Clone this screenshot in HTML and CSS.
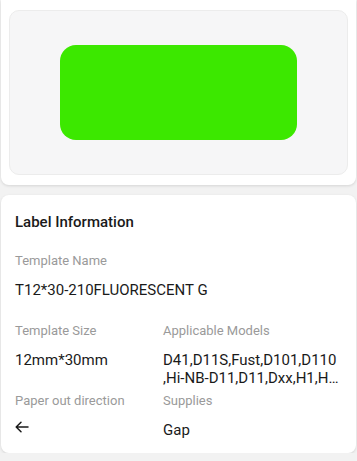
FILE: index.html
```html
<!DOCTYPE html>
<html lang="en">
<head>
    <meta charset="UTF-8">
    <meta name="viewport" content="width=device-width, initial-scale=1.0">
    <title>Label Information</title>
    <link rel="stylesheet" href="styles.css">
</head>
<body>

<div class="page">
    <div class="card preview-card">
        <div class="preview">
            <div class="label-shape"></div>
        </div>
    </div>

    <div class="card info-card">
        <div class="title">Label Information</div>

        <div class="row">
            <div class="field">
                <div class="label">Template Name</div>
                <div class="value">T12*30-210FLUORESCENT G</div>
            </div>
        </div>

        <div class="row two-col">
            <div class="field">
                <div class="label">Template Size</div>
                <div class="value">12mm*30mm</div>
            </div>
            <div class="field">
                <div class="label">Applicable Models</div>
                <div class="value">D41,D11S,Fust,D101,D110<br>,Hi-NB-D11,D11,Dxx,H1,H…</div>
            </div>
        </div>

        <div class="row two-col">
            <div class="field">
                <div class="label">Paper out direction</div>
                <div class="value">
                    <svg class="arrow" width="14" height="12" viewBox="0 0 14 12">
                        <path d="M13 6H1.5M6 1.2L1.2 6L6 10.8" fill="none" stroke="#1a1a1a" stroke-width="1.5" stroke-linecap="round" stroke-linejoin="round"/>
                    </svg>
                </div>
            </div>
            <div class="field">
                <div class="label">Supplies</div>
                <div class="value">Gap</div>
            </div>
        </div>
    </div>
</div>

</body>
</html>
```

FILE: styles.css
```css
body {
    font-family: Roboto, "Noto Sans", sans-serif;
    background-color: #f2f2f2;
    margin: 0;
}
.page {
    padding: 0 1px;
}
.card {
    background-color: #ffffff;
    border-radius: 8px;
    box-shadow: 0 1px 3px rgba(0, 0, 0, 0.12);
}
.preview-card {
    border-radius: 0 0 8px 8px;
    padding: 10px 8px;
    margin-bottom: 10px;
}
.preview {
    height: 163px;
    background-color: #f6f6f7;
    border: 1px solid #ececec;
    border-radius: 10px;
    display: flex;
    justify-content: center;
    align-items: center;
}
.label-shape {
    width: 237px;
    height: 95px;
    background-color: #3ce800;
    border-radius: 16px;
}
.info-card {
    padding: 17px 14px 14px 14px;
}
.title {
    font-size: 15px;
    font-weight: 500;
    line-height: 20px;
    color: #1a1a1a;
    margin-bottom: 20px;
}
.row {
    display: grid;
    grid-template-columns: 1fr;
    margin-bottom: 5px;
}
.row.two-col {
    grid-template-columns: 148px 1fr;
}
.row:last-child {
    margin-bottom: 0;
}
.label {
    font-size: 13px;
    line-height: 18px;
    color: #9a9a9a;
    margin-bottom: 11px;
}
.value {
    font-size: 15px;
    line-height: 18px;
    color: #1a1a1a;
    min-height: 36px;
}
.row:last-child .value {
    min-height: 18px;
}
.arrow {
    display: block;
    margin-top: 6px;
}
```
